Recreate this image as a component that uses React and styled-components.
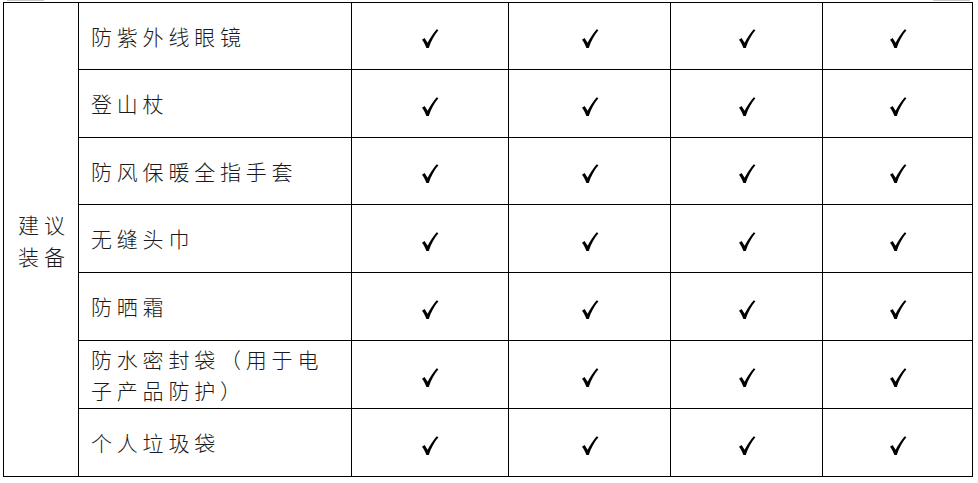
import React from "react";
import styled, { createGlobalStyle } from "styled-components";

const GlobalStyle = createGlobalStyle`
  html, body {
    margin: 0;
    padding: 0;
    background: #ffffff;
  }
  body {
    font-family: "Noto Sans CJK SC", "Noto Sans", sans-serif;
    color: #1a1a1a;
  }
`;

const columns = [75, 273, 157, 162, 152, 150];

const items = [
  { h: 67, lines: ["防紫外线眼镜"] },
  { h: 68, lines: ["登山杖"] },
  { h: 67, lines: ["防风保暖全指手套"] },
  { h: 68, lines: ["无缝头巾"] },
  { h: 68, lines: ["防晒霜"] },
  { h: 68, lines: ["防水密封袋（用于电", "子产品防护）"] },
  { h: 68, lines: ["个人垃圾袋"] },
];

const Check = () => (
  <svg width="18" height="21" viewBox="0 0 18 20">
    <path
      d="M1 11.2 L3.6 9.6 L6.6 14.2 C9 9.6 12.4 4.6 15.8 0.8 L17.4 1.8 C13.4 6.4 10.2 12.4 7.8 19.4 L5.4 19.4 C4.2 16.4 2.8 13.6 1 11.2 Z"
      fill="#000"
    />
  </svg>
);

const App = () => {
  return (
    <Page>
      <GlobalStyle />
      <TopStrip>
        <Scrap />
        <Scrap />
      </TopStrip>
      <Table>
        <colgroup>
          {columns.map((w, i) => (
            <Col key={i} $w={w} />
          ))}
        </colgroup>
        <tbody>
          {items.map((item, i) => (
            <Row key={i} $h={item.h}>
              {i === 0 && (
                <GroupCell rowSpan={items.length}>
                  建议
                  <br />
                  装备
                </GroupCell>
              )}
              <NameCell>
                {item.lines.map((l, j) => (
                  <React.Fragment key={j}>
                    {j > 0 && <br />}
                    {l}
                  </React.Fragment>
                ))}
              </NameCell>
              {[0, 1, 2, 3].map((k) => (
                <CheckCell key={k}>
                  <Check />
                </CheckCell>
              ))}
            </Row>
          ))}
        </tbody>
      </Table>
    </Page>
  );
};

export default App;

const Page = styled.div`
  width: 978px;
  height: 483px;
  overflow: hidden;
`;

const TopStrip = styled.div`
  display: flex;
  justify-content: space-between;
  height: 2px;
  padding: 0 8px 0 7px;
`;

const Scrap = styled.div`
  width: 37px;
  height: 1px;
  background: #c8c8c8;
`;

const Table = styled.table`
  margin-left: 3px;
  border-collapse: collapse;
  table-layout: fixed;
  width: 970px;
`;

const Col = styled.col`
  width: ${(p) => p.$w}px;
`;

const Row = styled.tr`
  height: ${(p) => p.$h}px;
`;

const Cell = styled.td`
  border: 1px solid #000;
  padding: 0;
  font-size: 21px;
  line-height: 31px;
  letter-spacing: 5px;
  font-weight: 300;
`;

const GroupCell = styled(Cell)`
  text-align: center;
  padding: 0 0 0 6px;
  line-height: 32px;
`;

const NameCell = styled(Cell)`
  padding: 0 4px 0 12px;
  text-align: left;
  white-space: nowrap;
  letter-spacing: 4.8px;
`;

const CheckCell = styled(Cell)`
  text-align: center;
  vertical-align: middle;
  letter-spacing: 0;

  svg {
    display: inline-block;
    vertical-align: middle;
  }
`;
